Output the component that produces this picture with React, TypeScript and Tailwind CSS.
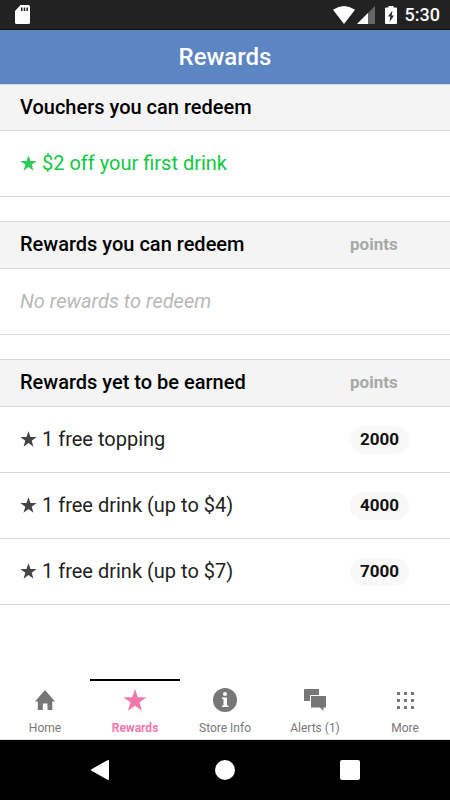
import type { ReactNode } from "react";

type Reward = { name: string; points: number };

const VOUCHERS = ["$2 off your first drink"];
const REDEEMABLE: Reward[] = [];
const UPCOMING: Reward[] = [
  { name: "1 free topping", points: 2000 },
  { name: "1 free drink (up to $4)", points: 4000 },
  { name: "1 free drink (up to $7)", points: 7000 },
];

function StarIcon({ className }: { className: string }) {
  return (
    <svg viewBox="0 0 24 22" className={className} fill="currentColor" aria-hidden="true">
      <path d="M12 0l2.800 8.200h8.700l-7 5.200L19 21.800l-7-5.100-7 5.100 2.500-8.400-7-5.200h8.700z" />
    </svg>
  );
}

function StatusBar() {
  return (
    <div className="flex h-[30px] items-center justify-between border-b border-[#111] bg-[#222] px-2.5 text-white">
      <svg viewBox="0 0 15 19" className="ml-[5px] h-[19px] w-[15px]" aria-hidden="true">
        <path d="M5.500 0h8Q15 0 15 1.500v16Q15 19 13.500 19h-12Q0 19 0 17.500V6z" fill="#fff" />
        <path d="M6 2.500h1.500v3.500H6zM8.700 2.500h1.500v3.500H8.700zM11.400 2.500h1.500v3.500h-1.500z" fill="#222" />
      </svg>
      <div className="flex items-center">
        <svg viewBox="0 0 22 18" className="h-[18px] w-[22px]" fill="#fff" aria-hidden="true">
          <path d="M0 3.800Q11-3.600 22 3.800L11 18z" />
        </svg>
        <svg viewBox="0 0 18 18" className="ml-0.5 h-[18px] w-[18px]" aria-hidden="true">
          <path d="M18 0v18H0z" fill="#666" />
          <path d="M11 7v11H0z" fill="#fff" />
        </svg>
        <svg viewBox="0 0 12 18" className="ml-2.5 h-[18px] w-3" aria-hidden="true">
          <path d="M3.500 0h5v1.500H11q1 0 1 1V17q0 1-1 1H1q-1 0-1-1V2.500q0-1 1-1h2.500z" fill="#fff" />
          <path d="M7.500 4.500 3 10.500h2.500L4.500 16 9 9.500H6.500z" fill="#222" />
        </svg>
        <span className="ml-2 text-lg font-medium">5:30</span>
      </div>
    </div>
  );
}

function RewardsTable({ title, rewards, empty }: { title: string; rewards: Reward[]; empty?: string }) {
  return (
    <table className="w-full table-fixed border-separate border-spacing-0 text-left">
      <thead>
        <tr className="h-12 bg-[#f4f4f4]">
          <th scope="col" className="border-y border-[#d8d8d8] pb-0.5 pl-5 text-xl font-medium text-black">
            {title}
          </th>
          <th scope="col" className="w-[100px] border-y border-[#d8d8d8] text-[17px] font-bold text-[#a8a8a8]">
            points
          </th>
        </tr>
      </thead>
      <tbody>
        {rewards.length === 0 && (
          <tr className="h-[66px]">
            <td colSpan={2} className="border-b border-[#d8d8d8] pb-0.5 pl-5 text-xl text-[#b8b8b8] italic">
              {empty}
            </td>
          </tr>
        )}
        {rewards.map((reward) => (
          <tr key={reward.name} className="h-[66px]">
            <td className="border-b border-[#d8d8d8] pb-0.5 pl-5 text-xl text-[#222]">
              <span className="flex items-center gap-[5px]">
                <StarIcon className="h-4 w-[17px] text-[#444]" />
                {reward.name}
              </span>
            </td>
            <td className="border-b border-[#d8d8d8]">
              <span className="inline-block rounded-full bg-[#f8f8f8] px-2.5 pb-0.5 text-[17px] leading-[26px] font-bold text-[#111]">
                {reward.points}
              </span>
            </td>
          </tr>
        ))}
      </tbody>
    </table>
  );
}

function Tab({ label, active, children }: { label: string; active?: boolean; children: ReactNode }) {
  return (
    <a
      href="#"
      aria-current={active ? "page" : undefined}
      className={
        active
          ? "flex flex-1 flex-col items-center border-t-2 border-black text-[#f277ab]"
          : "flex flex-1 flex-col items-center border-t-2 border-transparent text-[#777]"
      }
    >
      <span className="flex h-[38px] items-center">{children}</span>
      <span className={active ? "text-xs leading-[18px] font-bold" : "text-xs leading-[18px]"}>{label}</span>
    </a>
  );
}

function TabBar() {
  return (
    <nav className="flex h-[61px] border-b border-[#ddd]">
      <Tab label="Home">
        <svg viewBox="0 0 20 20" className="size-5" fill="currentColor" aria-hidden="true">
          <path d="M10 0 0 11.500h2.800V20h5v-6.500h4.700V20h4.800v-8.500H20z" />
        </svg>
      </Tab>
      <Tab label="Rewards" active>
        <StarIcon className="h-[22px] w-6" />
      </Tab>
      <Tab label="Store Info">
        <svg viewBox="0 0 24 24" className="size-6" aria-hidden="true">
          <circle cx="12" cy="12" r="12" fill="currentColor" />
          <circle cx="12" cy="6" r="2" fill="#fff" />
          <path d="M9 9.500h5v8h1.500V19H9v-1.500h1.500V11H9z" fill="#fff" />
        </svg>
      </Tab>
      <Tab label="Alerts (1)">
        <svg viewBox="0 0 22 22" className="size-[22px]" fill="currentColor" aria-hidden="true">
          <path d="M0 0h15v6H6v6H0z" />
          <path d="M7 7h15v11.500h-2.500V22L16 18.500H7z" />
        </svg>
      </Tab>
      <Tab label="More">
        <svg viewBox="0 0 17 17" className="size-[17px]" fill="currentColor" aria-hidden="true">
          {[0, 7, 14].map((y) => (
            <path key={y} d={`M0 ${y}h3v3H0zM7 ${y}h3v3H7zM14 ${y}h3v3h-3z`} />
          ))}
        </svg>
      </Tab>
    </nav>
  );
}

function SystemBar() {
  return (
    <div className="flex h-[60px] items-center justify-center gap-[105px] bg-black">
      <button type="button" aria-label="Back">
        <svg viewBox="0 0 20 20" className="size-5" aria-hidden="true">
          <path d="M2 10 18 1v18z" fill="#fff" stroke="#fff" strokeWidth="2" strokeLinejoin="round" />
        </svg>
      </button>
      <button type="button" aria-label="Home" className="size-5 rounded-full bg-white" />
      <button type="button" aria-label="Recent apps" className="size-5 rounded-xs bg-white" />
    </div>
  );
}

export default function App() {
  return (
    <div className="flex min-h-screen flex-col bg-white font-['Roboto',sans-serif]">
      <StatusBar />
      <header className="flex h-[54px] items-center justify-center bg-[#5c85c3]">
        <h1 className="text-2xl font-medium text-white">Rewards</h1>
      </header>
      <main className="flex flex-1 flex-col gap-6">
        <section>
          <h2 className="flex h-[47px] items-center border-y border-[#d8d8d8] bg-[#f4f4f4] px-5 pb-0.5 text-xl font-medium text-black">
            Vouchers you can redeem
          </h2>
          <ul>
            {VOUCHERS.map((voucher) => (
              <li
                key={voucher}
                className="flex h-[66px] items-center gap-[5px] border-b border-[#d8d8d8] px-5 pb-0.5 text-xl text-[#10c840]"
              >
                <StarIcon className="h-4 w-[17px] text-[#2dcb5c]" />
                {voucher}
              </li>
            ))}
          </ul>
        </section>
        <RewardsTable title="Rewards you can redeem" rewards={REDEEMABLE} empty="No rewards to redeem" />
        <RewardsTable title="Rewards yet to be earned" rewards={UPCOMING} />
      </main>
      <TabBar />
      <SystemBar />
    </div>
  );
}
